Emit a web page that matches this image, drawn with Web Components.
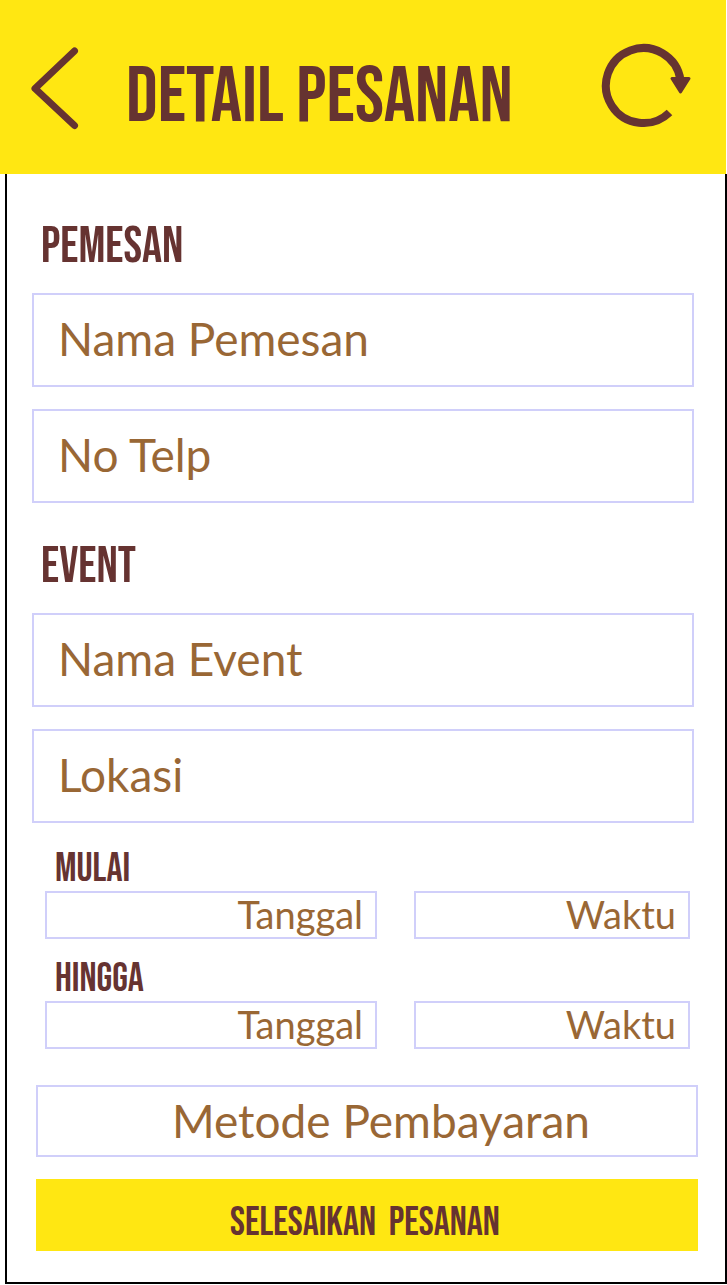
<!DOCTYPE html>
<html lang="id">
<head>
<meta charset="utf-8">
<meta name="viewport" content="width=device-width, initial-scale=1">
<title>Detail Pesanan</title>
<style>
  :root {
    --yellow: #ffe712;
    --maroon: #663331;
    --brown: #996735;
    --line: #d0cffa;
    --heading: "Bebas Neue", "Liberation Sans", sans-serif;
  }
  body { margin: 0; background: #fff; font-family: Lato, sans-serif; color: var(--brown); }
</style>
</head>
<body>
<order-page></order-page>

<script>
const define = (name, html, setup) => {
  const template = document.createElement('template');
  template.innerHTML = html;
  customElements.define(name, class extends HTMLElement {
    constructor() {
      super();
      this.attachShadow({ mode: 'open' }).append(template.content.cloneNode(true));
    }
    connectedCallback() {
      if (setup) setup(this, this.shadowRoot);
    }
  });
};

define('app-bar', `
  <style>
    :host { display: block; background: var(--yellow); color: var(--maroon); margin-right: 1px; }
    header { display: flex; align-items: center; height: 174px; padding: 0 35px 0 28px; box-sizing: border-box; }
    h1 { flex: 1; margin: 0 0 0 46px; font: 78px/76px var(--heading); padding-top: 22px; white-space: nowrap; }
    a, button { display: block; padding: 0; border: 0; background: none; color: inherit; cursor: pointer; }
    svg { display: block; }
  </style>
  <header>
    <a href="#kembali" aria-label="Kembali">
      <svg width="52" height="88" viewBox="0 0 52 88" fill="none" stroke="currentColor" stroke-width="7" stroke-linecap="round" stroke-linejoin="round"><path d="M46.500 8 7 45.500 46.500 82.500"/></svg>
    </a>
    <h1><slot></slot></h1>
    <button type="button" aria-label="Muat ulang">
      <svg width="92" height="88" viewBox="0 0 92 88"><path d="M70.500 69.500A37.500 37.500 0 1 1 81.500 37" fill="none" stroke="currentColor" stroke-width="8"/><path d="M73 35.500H90L81.500 49Z" fill="currentColor" stroke="currentColor" stroke-width="3" stroke-linejoin="round"/></svg>
    </button>
  </header>`);

define('text-field', `
  <style>
    :host { display: block; min-width: 0; }
    input { display: block; box-sizing: border-box; width: 100%; height: 94px; padding: 0 24px 4px; border: 2px solid var(--line); border-radius: 0; background: #fff; color: var(--brown); font: 46px/58px Lato, sans-serif; outline-offset: 2px; }
    input::placeholder { color: var(--brown); opacity: 1; }
    :host([small]) input { height: 48px; padding: 0 12px 2px; font-size: 38px; line-height: 42px; text-align: right; }
  </style>
  <input type="text">`,
  (host, root) => {
    const input = root.querySelector('input');
    input.placeholder = host.getAttribute('placeholder');
    input.setAttribute('aria-label', host.getAttribute('label') || input.placeholder);
  });

define('form-section', `
  <style>
    :host { display: block; margin-right: 4px; }
    h2 { margin: 0 0 0 9px; font: 50px/40px var(--heading); color: var(--maroon); }
    div { display: grid; gap: 22px; margin-top: 26px; }
  </style>
  <section>
    <h2></h2>
    <div><slot></slot></div>
  </section>`,
  (host, root) => { root.querySelector('h2').textContent = host.getAttribute('heading'); });

define('time-row', `
  <style>
    :host { display: block; margin: 0 8px 0 13px; }
    fieldset { margin: 0; padding: 0; border: 0; min-width: 0; }
    legend { padding: 0 0 4px 10px; font: 40px/36px var(--heading); color: var(--maroon); }
    div { display: grid; grid-template-columns: 332fr 276fr; gap: 37px; }
  </style>
  <fieldset>
    <legend></legend>
    <div>
      <text-field small placeholder="Tanggal"></text-field>
      <text-field small placeholder="Waktu"></text-field>
    </div>
  </fieldset>`,
  (host, root) => {
    const name = host.getAttribute('heading');
    root.querySelector('legend').textContent = name;
    root.querySelectorAll('text-field').forEach(field => {
      const label = name + ' ' + field.getAttribute('placeholder');
      field.setAttribute('label', label);
      field.shadowRoot.querySelector('input').setAttribute('aria-label', label);
    });
  });

define('payment-select', `
  <style>
    :host { display: block; }
    select { display: block; appearance: none; box-sizing: border-box; width: 100%; height: 72px; margin: 0; padding: 0 0 0 28px; border: 2px solid var(--line); border-radius: 0; background: #fff; color: var(--brown); font: 46px/58px Lato, sans-serif; text-align: center; text-align-last: center; }
  </style>
  <select aria-label="Metode Pembayaran"><option>Metode Pembayaran</option></select>`);

define('submit-button', `
  <style>
    :host { display: block; }
    button { display: block; width: 100%; height: 72px; padding: 16px 4px 0 0; border: 0; background: var(--yellow); color: var(--maroon); font: 40px/40px var(--heading); cursor: pointer; }
  </style>
  <button type="submit"><slot></slot></button>`);

define('order-page', `
  <style>
    :host { display: block; }
    main { margin: 0 0 1px 5px; padding: 53px 27px 31px 25px; border: 2px solid #000; border-top: 0; }
    form { display: block; }
    form-section + form-section { margin-top: 44px; }
    .times { display: grid; gap: 22px; margin-top: 28px; }
    .actions { display: grid; gap: 22px; margin: 36px 0 0 4px; }
  </style>
  <app-bar>DETAIL PESANAN</app-bar>
  <main>
    <form>
      <form-section heading="PEMESAN">
        <text-field placeholder="Nama Pemesan"></text-field>
        <text-field placeholder="No Telp"></text-field>
      </form-section>
      <form-section heading="EVENT">
        <text-field placeholder="Nama Event"></text-field>
        <text-field placeholder="Lokasi"></text-field>
      </form-section>
      <div class="times">
        <time-row heading="MULAI"></time-row>
        <time-row heading="HINGGA"></time-row>
      </div>
      <div class="actions">
        <payment-select></payment-select>
        <submit-button>SELESAIKAN&nbsp; PESANAN</submit-button>
      </div>
    </form>
  </main>`);
</script>
</body>
</html>
